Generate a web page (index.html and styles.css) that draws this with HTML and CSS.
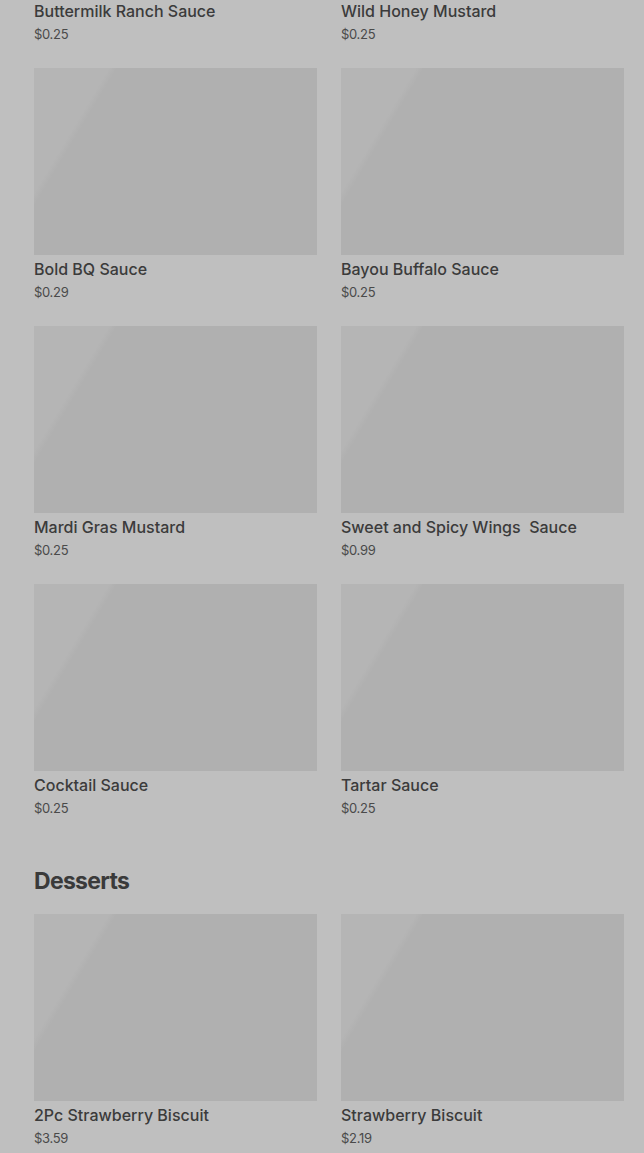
FILE: index.html
```html
<!DOCTYPE html>
<html lang="en">
<head>
<meta charset="utf-8">
<title>Menu</title>
<link rel="stylesheet" href="styles.css">
</head>
<body>
<main class="page">
  <section class="section section-first">
    <div class="grid">
      <div class="card"><div class="thumb"></div><div class="name">Buttermilk Ranch Sauce</div><div class="price">$0.25</div></div>
      <div class="card"><div class="thumb"></div><div class="name">Wild Honey Mustard</div><div class="price">$0.25</div></div>
      <div class="card"><div class="thumb"></div><div class="name">Bold BQ Sauce</div><div class="price">$0.29</div></div>
      <div class="card"><div class="thumb"></div><div class="name">Bayou Buffalo Sauce</div><div class="price">$0.25</div></div>
      <div class="card"><div class="thumb"></div><div class="name">Mardi Gras Mustard</div><div class="price">$0.25</div></div>
      <div class="card"><div class="thumb"></div><div class="name">Sweet and Spicy Wings&nbsp; Sauce</div><div class="price">$0.99</div></div>
      <div class="card"><div class="thumb"></div><div class="name">Cocktail Sauce</div><div class="price">$0.25</div></div>
      <div class="card"><div class="thumb"></div><div class="name">Tartar Sauce</div><div class="price">$0.25</div></div>
    </div>
  </section>
  <section class="section">
    <h2 class="section-title">Desserts</h2>
    <div class="grid">
      <div class="card"><div class="thumb"></div><div class="name">2Pc Strawberry Biscuit</div><div class="price">$3.59</div></div>
      <div class="card"><div class="thumb"></div><div class="name">Strawberry Biscuit</div><div class="price">$2.19</div></div>
    </div>
  </section>
</main>
</body>
</html>
```
FILE: styles.css
```css
html, body {
  margin: 0;
  padding: 0;
  background: #bfbfbf;
  overflow: hidden;
}
body {
  font-family: Inter, Roboto, "Liberation Sans", Arial, sans-serif;
  color: #3b3b3b;
}
.page {
  padding: 0 20px 0 34px;
}
.section-first {
  margin-top: -190px;
}
.section {
  margin-bottom: 48px;
}
.section-title {
  margin: 0 0 17px;
  font-size: 23px;
  line-height: 32px;
  font-weight: 700;
  letter-spacing: -0.7px;
  color: #3a3a3a;
}
.grid {
  display: grid;
  grid-template-columns: 1fr 1fr;
  column-gap: 24px;
  row-gap: 25px;
}
.card {
  display: flex;
  flex-direction: column;
}
.thumb {
  height: 187px;
  background: linear-gradient(121deg, #b5b5b5 0%, #b5b5b5 19%, #b0b0b0 21%, #b0b0b0 100%);
}
.name {
  margin-top: 4px;
  font-size: 16px;
  line-height: 20px;
  font-weight: 500;
  color: #3b3b3b;
}
.price {
  margin-top: 4px;
  font-size: 13px;
  line-height: 18px;
  color: #4a4a4a;
  letter-spacing: -0.3px;
}
```
